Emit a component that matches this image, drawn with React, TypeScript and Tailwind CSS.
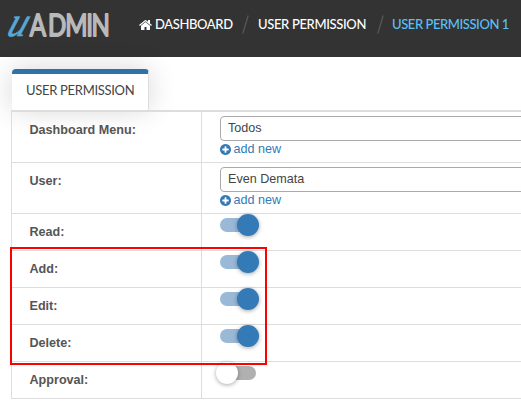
import type { ReactNode } from "react";

function HomeIcon() {
  return (
    <svg width="14" height="14" viewBox="0 0 1792 1792" fill="currentColor" className="mr-[2px] shrink-0" aria-hidden="true">
      <path d="M1408 992v480q0 26-19 45t-45 19h-384v-384h-256v384h-384q-26 0-45-19t-19-45v-480q0-1 .5-3t.5-3l575-474 575 474q1 2 1 6zm223-69l-62 74q-8 9-21 11h-3q-13 0-21-7l-692-577-692 577q-12 8-24 7-13-2-21-11l-62-74q-8-10-7-23.5t11-21.5l719-599q32-26 76-26t76 26l244 204v-195q0-14 9-23t23-9h192q14 0 23 9t9 23v408l219 182q10 8 11 21.5t-7 23.5z" />
    </svg>
  );
}

function PlusCircle() {
  return (
    <svg width="11" height="11" viewBox="128 128 1536 1536" fill="currentColor" className="shrink-0" aria-hidden="true">
      <path d="M1344 960v-128q0-26-19-45t-45-19h-256v-256q0-26-19-45t-45-19h-128q-26 0-45 19t-19 45v256h-256q-26 0-45 19t-19 45v128q0 26 19 45t45 19h256v256q0 26 19 45t45 19h128q26 0 45-19t19-45v-256h256q26 0 45-19t19-45zm320-64q0 209-103 385.5t-279.5 279.5-385.5 103-385.5-103-279.5-279.5-103-385.5 103-385.5 279.5-279.5 385.5-103 385.5 103 279.5 279.5 103 385.5z" />
    </svg>
  );
}

function Logo() {
  return (
    <svg width="113" height="57" viewBox="0 0 113 57" className="shrink-0" role="img" aria-label="uADMIN">
      <text
        transform="translate(5.5 36.3) skewX(-20)"
        fontFamily="'Liberation Serif', serif"
        fontStyle="italic"
        fontSize="42"
        textLength="19"
        lengthAdjust="spacingAndGlyphs"
        fill="#55a9d8"
        stroke="#55a9d8"
        strokeWidth=".6"
      >
        u
      </text>
      <text
        transform="translate(0 35.6) scale(.8 1)"
        x="37.2 60 81.5 107.8 114.5"
        y="0"
        fontFamily="Lato, sans-serif"
        fontSize="30"
        fill="#b9b9b9"
        stroke="#b9b9b9"
        strokeWidth="1.8"
        strokeLinejoin="round"
      >
        ADMIN
      </text>
    </svg>
  );
}

function Slash() {
  return (
    <svg width="7" height="19" viewBox="0 0 7 19" className="shrink-0" aria-hidden="true">
      <path d="M6.2 .5L.8 18.5" stroke="#595959" strokeWidth="1.2" />
    </svg>
  );
}

function Row({ label, tall, children }: { label: string; tall?: boolean; children: ReactNode }) {
  return (
    <div className={`flex border-b border-[#ddd] ${tall ? "h-[51px]" : "h-[37px]"}`}>
      <div className="w-[190px] shrink-0 border-r border-[#ddd] pl-[17.5px] pt-[11px] text-[12.6px] font-bold leading-[15px] text-[#555]">
        {label}
      </div>
      <div className="min-w-0 flex-1 pl-[18px] pt-[4px]">{children}</div>
    </div>
  );
}

function SelectField({ value }: { value: string }) {
  return (
    <>
      <div className="h-[25px] w-[420px] rounded-[4px] border border-[#aaa] bg-white pl-[7px] text-[12.6px] leading-[22px] text-[#444]">
        {value}
      </div>
      <div className="flex h-[16px] items-center gap-[2.5px] text-[12.6px] leading-[15px] text-[#337ab7]">
        <PlusCircle />
        <span className="pt-px">add new</span>
      </div>
    </>
  );
}

function Toggle({ on }: { on?: boolean }) {
  return (
    <div className={`flex h-[14px] w-[36px] items-center rounded-full ${on ? "bg-[#99b9d7]" : "bg-[#b0b0b0]"}`}>
      <div
        className={`h-[22px] w-[22px] shrink-0 rounded-full shadow-[0_1px_4px_rgba(0,0,0,0.35)] ${
          on ? "ml-[17px] bg-[#337ab7]" : "-ml-[4px] bg-white"
        }`}
      />
    </div>
  );
}

export default function App() {
  return (
    <div className="relative h-[405px] w-[521px] overflow-hidden bg-white font-['Liberation_Sans',Arial,sans-serif]">
      <header className="flex h-[57px] bg-[#333]">
        <Logo />
        <nav className="flex h-[49px] items-center whitespace-nowrap pl-[26px] font-[Lato,sans-serif] text-[13px] font-medium leading-none text-white">
          <HomeIcon />
          <span className="w-[78px] tracking-[-0.38px]">DASHBOARD</span>
          <span className="ml-[9px] flex w-[16px]"><Slash /></span>
          <span className="w-[109px] tracking-[-0.35px]">USER PERMISSION</span>
          <span className="ml-[10px] flex w-[15px]"><Slash /></span>
          <span className="tracking-[-0.42px] text-[#5bc0f4]">USER PERMISSION 1</span>
        </nav>
      </header>
      <main className="pl-[11px] pt-[12px]">
        <div className="ml-px h-[41px] w-[137px] rounded-t-[4px] border-r border-[#ddd] border-t-[5px] border-t-[#3071a9] bg-white pl-[14px] pt-[9px] shadow-[0_0_28px_rgba(0,0,0,0.16)]">
          <div className="whitespace-nowrap font-[Lato,sans-serif] text-[13px] leading-[14px] tracking-[-0.3px] text-[#444]">USER PERMISSION</div>
        </div>
        <div className="w-[530px] border-l border-t-2 border-[#ddd]">
          <Row label="Dashboard Menu:" tall><SelectField value="Todos" /></Row>
          <Row label="User:" tall><SelectField value="Even Demata" /></Row>
          <Row label="Read:"><Toggle on /></Row>
          <Row label="Add:"><Toggle on /></Row>
          <Row label="Edit:"><Toggle on /></Row>
          <Row label="Delete:"><Toggle on /></Row>
          <Row label="Approval:"><Toggle /></Row>
        </div>
      </main>
      <div className="pointer-events-none absolute left-[10px] top-[247px] h-[118px] w-[257px] border-2 border-[#f00]" />
    </div>
  );
}
